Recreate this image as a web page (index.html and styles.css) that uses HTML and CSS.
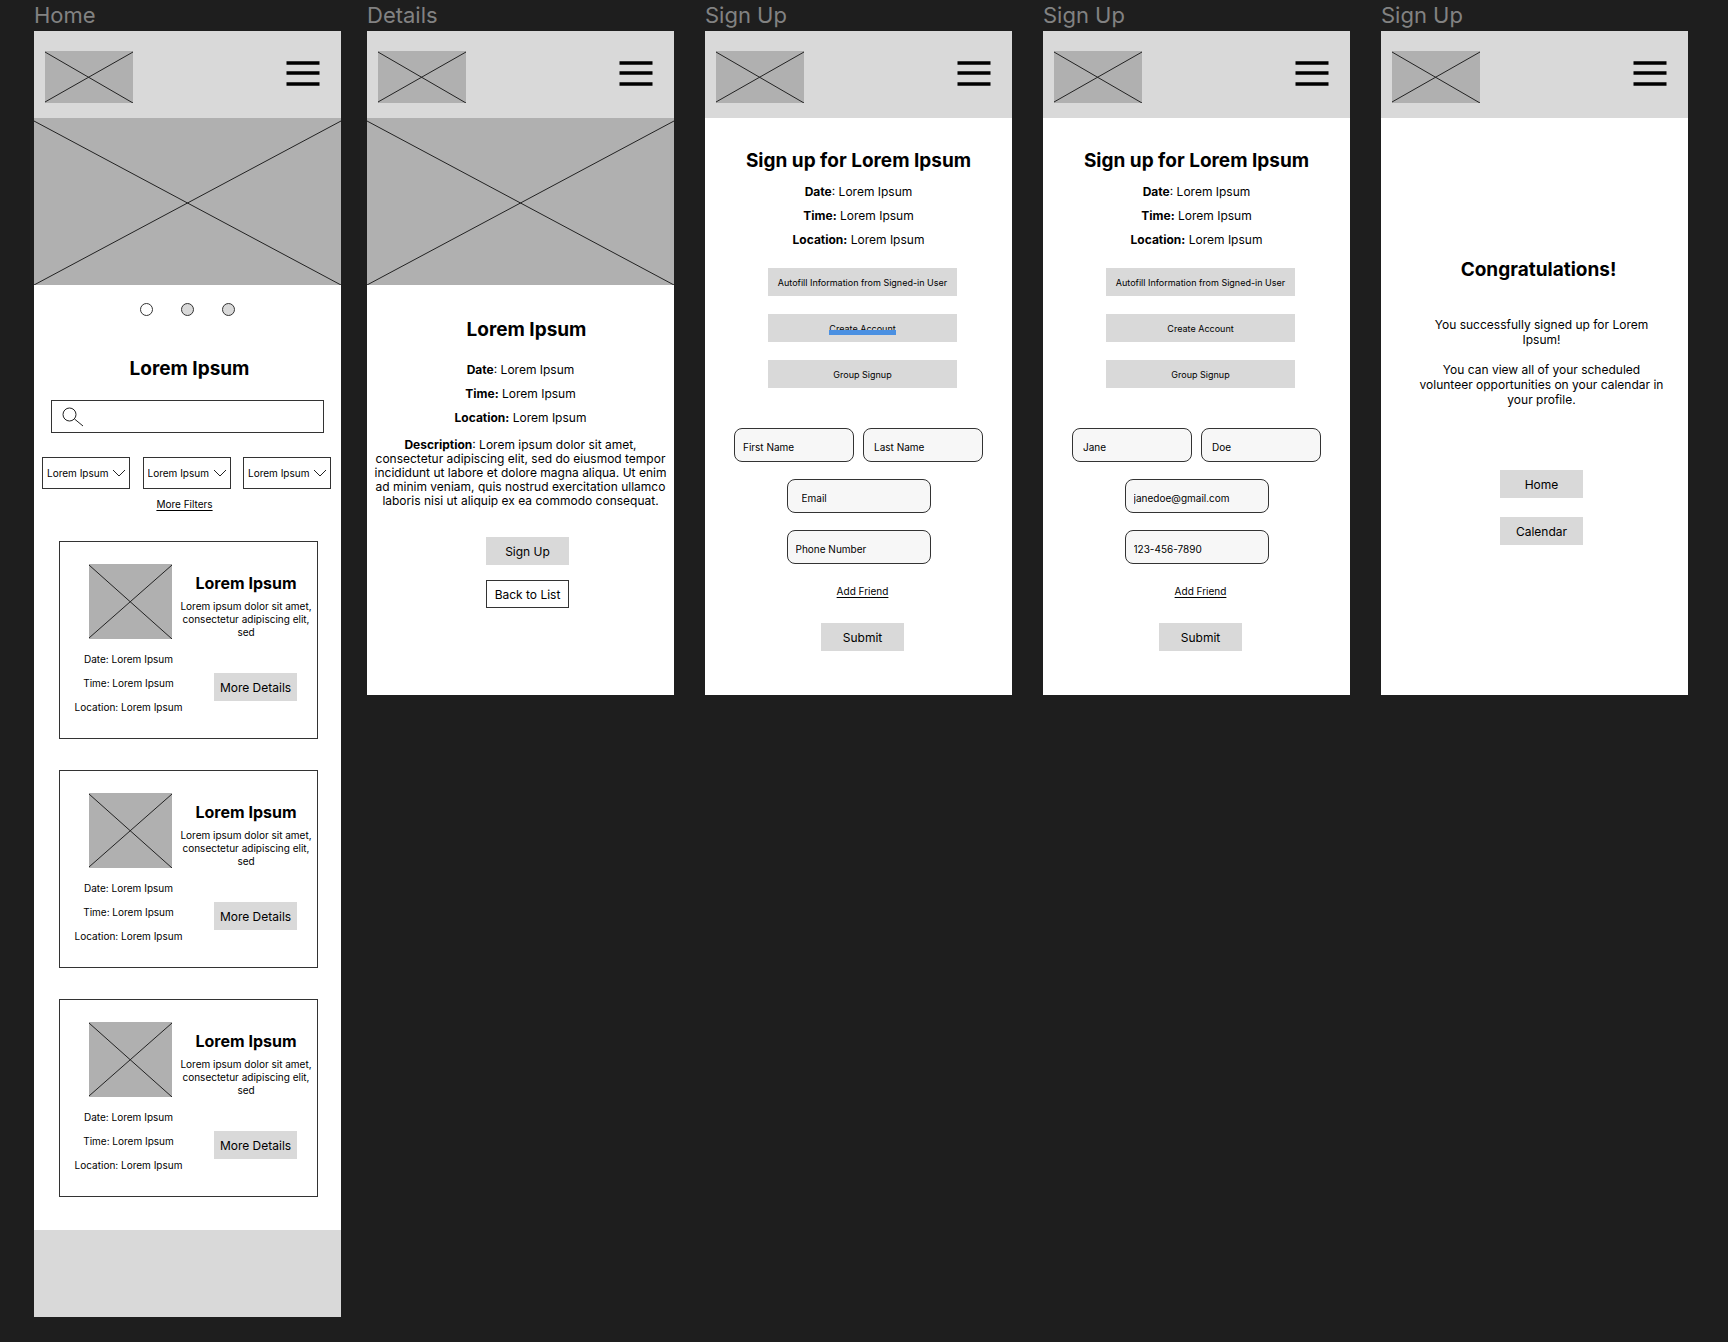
FILE: index.html
```html
<!DOCTYPE html>
<html lang="en">
<head>
<meta charset="utf-8">
<meta name="viewport" content="width=device-width, initial-scale=1">
<title>Volunteer app wireframes</title>
<link rel="stylesheet" href="styles.css">
</head>
<body>
<svg width="0" height="0" class="defs" aria-hidden="true">
  <symbol id="burger" viewBox="0 0 34 52"><path d="M0.500 12H33.500M0.500 22H33.500M0.500 33H33.500" stroke="#000" stroke-width="3.400" fill="none"/></symbol>
  <symbol id="chevron" viewBox="0 0 14 8"><path d="M1 1L7 7L13 1" stroke="#222" stroke-width="1" fill="none"/></symbol>
</svg>
<main class="board">

  <section class="screen">
    <h2 class="screen-name">Home</h2>
    <div class="artboard">
      <header class="bar">
        <svg class="logo" viewBox="0 0 88 52" preserveAspectRatio="none"><path d="M0 1L88 52M88 1L0 51"/></svg>
        <button class="menu" aria-label="Menu"><svg><use href="#burger"/></svg></button>
      </header>
      <svg class="hero" viewBox="0 0 307 167" preserveAspectRatio="none"><path d="M0 3L307 167M307 3L0 167"/></svg>
      <div class="home-body">
        <div class="dots">
          <button class="dot dot-current" aria-label="Slide 1"></button>
          <button class="dot" aria-label="Slide 2"></button>
          <button class="dot" aria-label="Slide 3"></button>
        </div>
        <h3 class="title title-home">Lorem Ipsum</h3>
        <div class="search">
          <svg viewBox="0 0 22 20"><circle cx="7.500" cy="7.500" r="6.500"/><path d="M12.500 12L21 19"/></svg>
          <input type="search" aria-label="Search">
        </div>
        <div class="filters">
          <div class="filter"><select aria-label="Filter 1"><option>Lorem Ipsum</option></select><svg><use href="#chevron"/></svg></div>
          <div class="filter"><select aria-label="Filter 2"><option>Lorem Ipsum</option></select><svg><use href="#chevron"/></svg></div>
          <div class="filter"><select aria-label="Filter 3"><option>Lorem Ipsum</option></select><svg><use href="#chevron"/></svg></div>
        </div>
        <a class="link link-filters" href="#">More Filters</a>
        <div class="cards">
          <article class="card">
            <div class="card-top">
              <svg class="thumb" viewBox="0 0 83 75" preserveAspectRatio="none"><path d="M0 1L83 75M83 1L0 74"/></svg>
              <div class="card-text">
                <h4>Lorem Ipsum</h4>
                <p>Lorem ipsum dolor sit amet, consectetur adipiscing elit, sed</p>
              </div>
            </div>
            <div class="card-bottom">
              <div class="card-meta"><p>Date: Lorem Ipsum</p><p>Time: Lorem Ipsum</p><p>Location: Lorem Ipsum</p></div>
              <button class="btn">More Details</button>
            </div>
          </article>
          <article class="card">
            <div class="card-top">
              <svg class="thumb" viewBox="0 0 83 75" preserveAspectRatio="none"><path d="M0 1L83 75M83 1L0 74"/></svg>
              <div class="card-text">
                <h4>Lorem Ipsum</h4>
                <p>Lorem ipsum dolor sit amet, consectetur adipiscing elit, sed</p>
              </div>
            </div>
            <div class="card-bottom">
              <div class="card-meta"><p>Date: Lorem Ipsum</p><p>Time: Lorem Ipsum</p><p>Location: Lorem Ipsum</p></div>
              <button class="btn">More Details</button>
            </div>
          </article>
          <article class="card">
            <div class="card-top">
              <svg class="thumb" viewBox="0 0 83 75" preserveAspectRatio="none"><path d="M0 1L83 75M83 1L0 74"/></svg>
              <div class="card-text">
                <h4>Lorem Ipsum</h4>
                <p>Lorem ipsum dolor sit amet, consectetur adipiscing elit, sed</p>
              </div>
            </div>
            <div class="card-bottom">
              <div class="card-meta"><p>Date: Lorem Ipsum</p><p>Time: Lorem Ipsum</p><p>Location: Lorem Ipsum</p></div>
              <button class="btn">More Details</button>
            </div>
          </article>
        </div>
      </div>
      <footer class="foot"></footer>
    </div>
  </section>

  <section class="screen screen-details">
    <h2 class="screen-name">Details</h2>
    <div class="artboard">
      <header class="bar">
        <svg class="logo" viewBox="0 0 88 52" preserveAspectRatio="none"><path d="M0 1L88 52M88 1L0 51"/></svg>
        <button class="menu" aria-label="Menu"><svg><use href="#burger"/></svg></button>
      </header>
      <svg class="hero" viewBox="0 0 307 167" preserveAspectRatio="none"><path d="M0 3L307 167M307 3L0 167"/></svg>
      <div class="details-body">
        <h3 class="title title-details">Lorem Ipsum</h3>
        <div class="meta"><p><b>Date</b>: Lorem Ipsum</p><p><b>Time:</b> Lorem Ipsum</p><p><b>Location:</b> Lorem Ipsum</p></div>
        <p class="description"><b>Description</b>: Lorem ipsum dolor sit amet, consectetur adipiscing elit, sed do eiusmod tempor incididunt ut labore et dolore magna aliqua. Ut enim ad minim veniam, quis nostrud exercitation ullamco laboris nisi ut aliquip ex ea commodo consequat.</p>
        <div class="details-actions">
          <button class="btn">Sign Up</button>
          <button class="btn btn-outline">Back to List</button>
        </div>
      </div>
    </div>
  </section>

  <section class="screen">
    <h2 class="screen-name">Sign Up</h2>
    <div class="artboard">
      <header class="bar">
        <svg class="logo" viewBox="0 0 88 52" preserveAspectRatio="none"><path d="M0 1L88 52M88 1L0 51"/></svg>
        <button class="menu" aria-label="Menu"><svg><use href="#burger"/></svg></button>
      </header>
      <form class="signup-body">
        <h3 class="title">Sign up for Lorem Ipsum</h3>
        <div class="meta"><p><b>Date</b>: Lorem Ipsum</p><p><b>Time:</b> Lorem Ipsum</p><p><b>Location:</b> Lorem Ipsum</p></div>
        <div class="options">
          <button type="button" class="btn btn-wide">Autofill Information from Signed-in User</button>
          <button type="button" class="btn btn-wide"><span class="marked">Create Account</span></button>
          <button type="button" class="btn btn-wide">Group Signup</button>
        </div>
        <div class="fields">
          <div class="names">
            <input class="field" type="text" aria-label="First Name" placeholder="First Name">
            <input class="field field-inset" type="text" aria-label="Last Name" placeholder="Last Name">
          </div>
          <input class="field field-long field-deep" type="email" aria-label="Email" placeholder="Email">
          <input class="field field-long" type="tel" aria-label="Phone Number" placeholder="Phone Number">
        </div>
        <div class="finish">
          <a class="link" href="#">Add Friend</a>
          <button type="button" class="btn">Submit</button>
        </div>
      </form>
    </div>
  </section>

  <section class="screen">
    <h2 class="screen-name">Sign Up</h2>
    <div class="artboard">
      <header class="bar">
        <svg class="logo" viewBox="0 0 88 52" preserveAspectRatio="none"><path d="M0 1L88 52M88 1L0 51"/></svg>
        <button class="menu" aria-label="Menu"><svg><use href="#burger"/></svg></button>
      </header>
      <form class="signup-body">
        <h3 class="title">Sign up for Lorem Ipsum</h3>
        <div class="meta"><p><b>Date</b>: Lorem Ipsum</p><p><b>Time:</b> Lorem Ipsum</p><p><b>Location:</b> Lorem Ipsum</p></div>
        <div class="options">
          <button type="button" class="btn btn-wide">Autofill Information from Signed-in User</button>
          <button type="button" class="btn btn-wide">Create Account</button>
          <button type="button" class="btn btn-wide">Group Signup</button>
        </div>
        <div class="fields">
          <div class="names">
            <input class="field field-inset" type="text" aria-label="First Name" value="Jane">
            <input class="field field-inset" type="text" aria-label="Last Name" value="Doe">
          </div>
          <input class="field field-long" type="email" aria-label="Email" value="janedoe@gmail.com">
          <input class="field field-long" type="tel" aria-label="Phone Number" value="123-456-7890">
        </div>
        <div class="finish">
          <a class="link" href="#">Add Friend</a>
          <button type="button" class="btn">Submit</button>
        </div>
      </form>
    </div>
  </section>

  <section class="screen">
    <h2 class="screen-name">Sign Up</h2>
    <div class="artboard">
      <header class="bar">
        <svg class="logo" viewBox="0 0 88 52" preserveAspectRatio="none"><path d="M0 1L88 52M88 1L0 51"/></svg>
        <button class="menu" aria-label="Menu"><svg><use href="#burger"/></svg></button>
      </header>
      <div class="done-body">
        <h3 class="title title-done">Congratulations!</h3>
        <div class="done-text">
          <p>You successfully signed up for Lorem Ipsum!</p>
          <p>You can view all of your scheduled volunteer opportunities on your calendar in your profile.</p>
        </div>
        <div class="done-actions">
          <button class="btn">Home</button>
          <button class="btn">Calendar</button>
        </div>
      </div>
    </div>
  </section>

</main>
</body>
</html>
```
FILE: styles.css
```css
* { box-sizing: border-box; }

body {
  margin: 0;
  background: #1e1e1e;
  color: #000;
  font-family: Inter, "Liberation Sans", sans-serif;
  font-size: 12px;
}

h2, h3, h4, p { margin: 0; }
button, input, select { font: inherit; color: inherit; margin: 0; }
svg { display: block; }
.defs { display: none; }

/* Canvas with the five screens side by side */
.board {
  display: flex;
  align-items: flex-start;
  gap: 31px;
  padding: 0 40px 25px 34px;
}
.screen { flex: 1 1 0; min-width: 300px; }
.screen-details { margin-left: -5px; }
.screen-name {
  font-size: 22px;
  line-height: 31px;
  font-weight: 400;
  color: #828282;
}
.artboard { background: #fff; }

/* Shared header */
.bar {
  display: flex;
  justify-content: space-between;
  align-items: flex-start;
  height: 87px;
  padding: 20px 21px 0 11px;
  background: #d9d9d9;
}
.logo, .hero, .thumb { background: #b0b0b0; stroke: #222; stroke-width: 1; fill: none; }
.logo { width: 88px; height: 52px; }
.menu { border: 0; padding: 0; background: none; }
.menu svg { width: 34px; height: 52px; }
.hero { width: 100%; height: 167px; }

/* Shared pieces */
.title { font-size: 19px; line-height: 24px; font-weight: 700; text-align: center; }
.btn {
  width: 83px;
  height: 28px;
  padding: 0;
  border: 0;
  background: #d9d9d9;
  font-size: 12px;
  white-space: nowrap;
}
.btn-outline { background: #fff; border: 1px solid #333; }
.btn-wide { width: 189px; font-size: 9px; }
.link { font-size: 10px; line-height: 12px; color: #000; text-underline-offset: 2px; }
.meta { line-height: 24px; text-align: center; }

/* Home */
.home-body { display: flex; flex-direction: column; padding: 18px 0 33px; }
.dots { display: flex; justify-content: center; gap: 28px; }
.dot { width: 13px; height: 13px; padding: 0; border: 1px solid #333; border-radius: 50%; background: #d9d9d9; }
.dot-current { background: #fff; }
.title-home { margin-top: 41px; padding-left: 4px; }
.search {
  display: flex;
  align-items: center;
  height: 33px;
  margin: 19px 17px 0;
  padding-left: 10px;
  border: 1px solid #333;
}
.search svg { width: 22px; height: 20px; fill: none; stroke: #222; stroke-width: 1; }
.search input { flex: 1; min-width: 0; border: 0; outline: 0; background: none; }
.filters { display: flex; justify-content: space-between; margin-top: 24px; padding: 0 10px 0 8px; }
.filter { display: grid; align-items: center; width: 88px; height: 32px; border: 1px solid #333; }
.filter select {
  grid-area: 1 / 1;
  width: 100%;
  height: 100%;
  padding: 0 0 0 4px;
  border: 0;
  appearance: none;
  background: none;
  font-size: 10px;
}
.filter svg { grid-area: 1 / 1; justify-self: end; width: 14px; height: 8px; margin-right: 3px; pointer-events: none; }
.link-filters { align-self: center; margin: 9px 6px 0 0; }
.cards { display: flex; flex-direction: column; gap: 31px; margin-top: 31px; padding: 0 23px 0 25px; }
.card { padding: 22px 0 19px; border: 1px solid #333; }
.card-top { display: flex; gap: 6px; padding-left: 29px; }
.thumb { flex: none; width: 83px; height: 75px; }
.card-text { flex: 1; min-width: 0; padding: 9px 3px 0 0; text-align: center; }
.card-text h4 { font-size: 16px; line-height: 20px; }
.card-text p { margin-top: 7px; font-size: 10px; line-height: 13px; }
.card-bottom { display: flex; gap: 31px; margin-top: 8px; padding-left: 14px; }
.card-meta { flex: none; width: 109px; font-size: 10px; line-height: 24px; text-align: center; white-space: nowrap; }
.card-bottom .btn { margin-top: 26px; }
.foot { height: 87px; background: #d9d9d9; }

/* Details */
.details-body { padding: 33px 5px 87px; }
.title-details { padding-left: 12px; }
.details-body .meta { margin-top: 16px; }
.description { margin-top: 8px; line-height: 14px; text-align: center; }
.details-actions { display: flex; flex-direction: column; align-items: center; gap: 15px; margin-top: 29px; padding-left: 14px; }

/* Sign up form */
.signup-body { padding: 31px 0 44px; }
.signup-body .meta { margin-top: 7px; }
.options { display: flex; flex-direction: column; align-items: center; gap: 18px; margin-top: 16px; padding-left: 8px; }
.marked { position: relative; display: inline-block; }
.marked::after {
  content: "";
  position: absolute;
  left: 0;
  right: 0;
  bottom: -1px;
  height: 5px;
  background: #4a90e2;
}
.fields { display: flex; flex-direction: column; align-items: center; gap: 17px; margin-top: 40px; }
.names { display: flex; gap: 9px; }
.field {
  width: 120px;
  height: 34px;
  padding: 3px 4px 0 8px;
  border: 1px solid #333;
  border-radius: 8px;
  background: #f7f7f7;
  font-size: 10px;
}
.field::placeholder { color: #000; opacity: 1; }
.field-inset { padding-left: 10px; }
.field-deep { padding-left: 14px; }
.field-long { width: 144px; }
.finish { display: flex; flex-direction: column; align-items: center; gap: 26px; margin-top: 21px; padding-left: 8px; }

/* Confirmation */
.done-body { padding: 140px 0 150px; }
.title-done { padding-left: 8px; }
.done-text { margin-top: 35px; padding: 0 21px 0 35px; line-height: 15px; text-align: center; }
.done-text p + p { margin-top: 15px; }
.done-actions { display: flex; flex-direction: column; align-items: center; gap: 19px; margin-top: 63px; padding-left: 14px; }
```
